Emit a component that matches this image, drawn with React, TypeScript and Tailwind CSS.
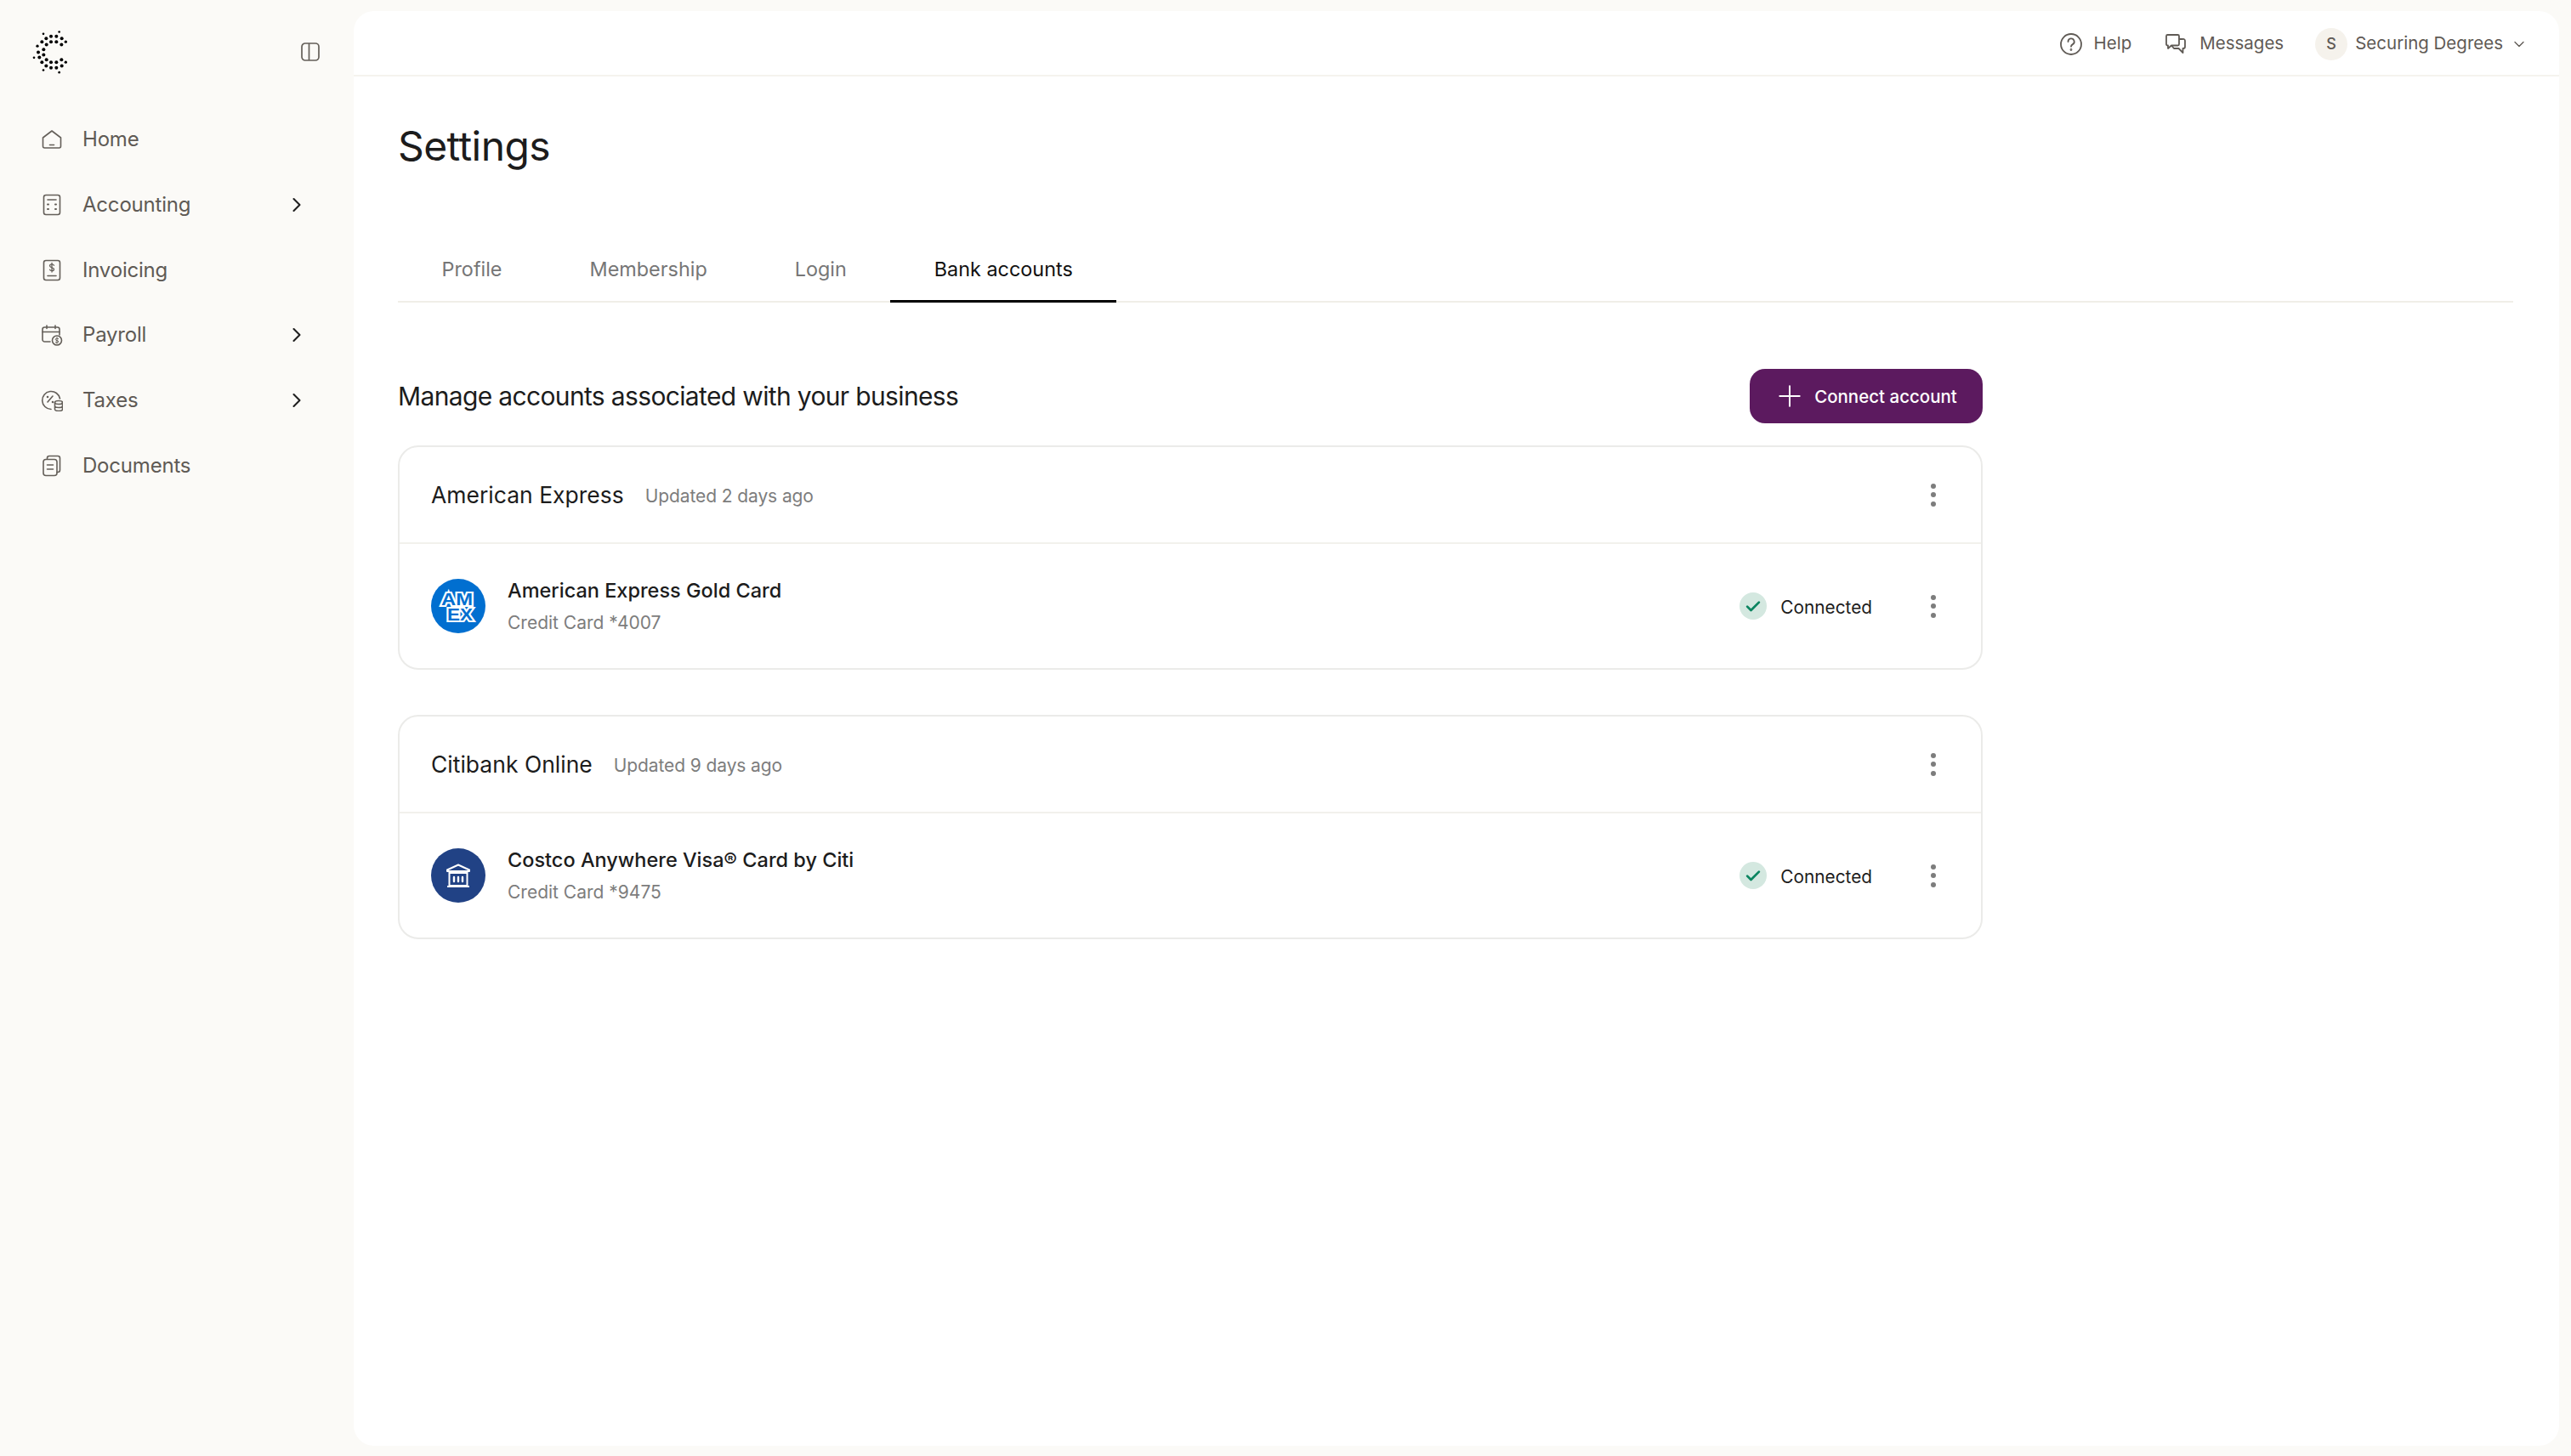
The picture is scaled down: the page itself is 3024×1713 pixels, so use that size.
import type { ReactNode } from "react";
import { ChevronDown, ChevronRight, Plus } from "lucide-react";

const LOGO_DOTS: [number, number, number][] = [
  [154, 118, 4], [210, 111, 4], [164, 134, 6], [181, 127, 6], [200, 127, 6], [219, 134, 6],
  [149, 146, 6], [181, 146, 6], [200, 146, 6], [233, 146, 5], [165, 156, 6], [218, 156, 6],
  [133, 161, 5], [155, 173, 6], [136, 183, 6], [155, 192, 6], [121, 202, 4], [140, 201, 6],
  [165, 209, 6], [218, 209, 6], [149, 218, 6], [181, 218, 6], [200, 218, 6], [233, 218, 5],
  [164, 231, 6], [219, 231, 6], [181, 238, 6], [200, 238, 6], [154, 246, 4], [210, 254, 4],
];

function Logo() {
  return (
    <svg viewBox="100 95 150 170" className="h-[57px] w-[50px]" fill="#000">
      {LOGO_DOTS.map(([cx, cy, r]) => (
        <circle key={`${cx}-${cy}`} cx={cx} cy={cy} r={r} />
      ))}
    </svg>
  );
}

function Stroke({ children, size = 26 }: { children: ReactNode; size?: number }) {
  return (
    <svg
      viewBox="0 0 26 26"
      width={size}
      height={size}
      fill="none"
      stroke="#645f59"
      strokeWidth="1.6"
      strokeLinecap="round"
      strokeLinejoin="round"
    >
      {children}
    </svg>
  );
}

const HomeIcon = () => (
  <Stroke>
    <path d="M2.5 11 13 3l10.500 8v10a2 2 0 0 1-2 2h-17a2 2 0 0 1-2-2z" />
    <path d="M10.500 19.500h5" />
  </Stroke>
);

const CalcIcon = () => (
  <Stroke>
    <rect x="3.500" y="1.500" width="19" height="23" rx="2.500" />
    <path d="M8 7h10" />
    <path d="M8 12.500h1M17 12.500h1M8 18h1M17 18h1" strokeWidth="2" />
  </Stroke>
);

const InvoiceIcon = () => (
  <Stroke>
    <rect x="3.500" y="1.500" width="19" height="23" rx="2.500" />
    <path d="M8 19.500h10" />
    <path d="M15.500 7.200c-.5-.9-1.400-1.300-2.500-1.300-1.400 0-2.500.7-2.500 1.900 0 2.700 5 1.300 5 3.900 0 1.200-1.100 1.900-2.500 1.900-1.100 0-2-.4-2.500-1.300M13 4.500v10.500" strokeWidth="1.300" />
  </Stroke>
);

const PayrollIcon = () => (
  <Stroke>
    <path d="M11 21H4.500a2.500 2.500 0 0 1-2.500-2.500v-12A2.500 2.500 0 0 1 4.500 4h15A2.500 2.500 0 0 1 22 6.500V13" />
    <path d="M2 9.500h20M7 2v3.500M17 2v3.500" />
    <circle cx="19" cy="19.500" r="5.500" />
    <path d="M20.800 17.800c-.4-.5-1-.8-1.800-.8-1 0-1.800.5-1.800 1.300 0 1.800 3.600.9 3.600 2.600 0 .9-.8 1.400-1.800 1.400-.8 0-1.400-.3-1.800-.8M19 16v7" strokeWidth="1" />
  </Stroke>
);

const TaxIcon = () => (
  <Stroke>
    <path d="M12 23.500A10.500 10.500 0 1 1 22.500 11" />
    <path d="M8 15l6-7" />
    <circle cx="8" cy="9" r=".6" strokeWidth="1.400" />
    <circle cx="14" cy="15" r=".6" strokeWidth="1.400" />
    <ellipse cx="21" cy="15.500" rx="4.500" ry="2" />
    <path d="M16.500 15.500v8c0 1.100 2 2 4.500 2s4.500-.9 4.500-2v-8M16.500 19.500c0 1.100 2 2 4.500 2s4.500-.9 4.500-2" />
  </Stroke>
);

const DocsIcon = () => (
  <Stroke>
    <path d="M7.500 5V4a2.500 2.500 0 0 1 2.500-2.500h10A2.500 2.500 0 0 1 22.500 4v14a2.500 2.500 0 0 1-2.500 2.500h-1" />
    <rect x="3" y="5.500" width="16" height="19" rx="3" />
    <path d="M7.500 12h7M7.500 17h7" />
  </Stroke>
);

const NAV = [
  { label: "Home", icon: <HomeIcon /> },
  { label: "Accounting", icon: <CalcIcon />, more: true },
  { label: "Invoicing", icon: <InvoiceIcon /> },
  { label: "Payroll", icon: <PayrollIcon />, more: true },
  { label: "Taxes", icon: <TaxIcon />, more: true },
  { label: "Documents", icon: <DocsIcon /> },
];

function Sidebar() {
  return (
    <aside className="flex w-[416px] shrink-0 flex-col">
      <div className="flex h-[121px] items-center justify-between pl-[33px] pr-[40px]">
        <Logo />
        <svg viewBox="0 0 22 22" className="h-[22px] w-[22px]" fill="none" stroke="#645f59" strokeWidth="1.700">
          <rect x="1" y="1" width="20" height="20" rx="4" />
          <path d="M9.500 1v20" />
        </svg>
      </div>
      <nav className="flex flex-col pl-[48px] pr-[53px] pt-[5px]">
        {NAV.map((item) => (
          <div key={item.label} className="flex h-[76.700px] items-center">
            <span className="flex w-[26px] justify-center">{item.icon}</span>
            <span className="ml-[23px] text-[24px] tracking-[-0.2px] text-[#5f5a55]">{item.label}</span>
            {item.more ? (
              <ChevronRight className="ml-auto h-[28px] w-[28px] text-[#1e1e1e]" strokeWidth={1.800} />
            ) : null}
          </div>
        ))}
      </nav>
    </aside>
  );
}

function TopBar() {
  return (
    <header className="flex h-[77px] items-center justify-end border-b-2 border-[#f5f3ee] pr-[37px] pt-[2px] text-[20.500px] text-[#5f5a55]">
      <svg viewBox="0 0 26 26" width="26" height="26" fill="none" stroke="#5f5a55" strokeWidth="1.800" strokeLinecap="round">
        <circle cx="13" cy="13" r="12" />
        <path d="M9.500 10a3.600 3.600 0 1 1 5.400 3.100c-1.200.7-1.900 1.400-1.900 2.700" />
        <circle cx="13" cy="19.500" r=".5" />
      </svg>
      <span className="ml-[14px]">Help</span>
      <svg className="ml-[39px]" viewBox="0 0 26 26" width="26" height="26" fill="none" stroke="#5f5a55" strokeWidth="1.800" strokeLinejoin="round">
        <path d="M2 3.500A1.500 1.500 0 0 1 3.500 2h12A1.500 1.500 0 0 1 17 3.500V13a1.500 1.500 0 0 1-1.500 1.500H8L4 18v-3.500H3.500A1.500 1.500 0 0 1 2 13z" />
        <path d="M17 7h4.500A2 2 0 0 1 24 9v7a2 2 0 0 1-2 2h-.5v5l-5-5H11l-3-3.500" />
      </svg>
      <span className="ml-[15px]">Messages</span>
      <span className="ml-[37px] flex h-[38px] w-[38px] items-center justify-center rounded-full bg-[#f5f2ec] text-[18px] font-medium">
        S
      </span>
      <span className="ml-[9px]">Securing Degrees</span>
      <ChevronDown className="ml-[9px] h-[20px] w-[20px]" strokeWidth={1.600} />
    </header>
  );
}

const TABS = ["Profile", "Membership", "Login", "Bank accounts"];

function Tabs() {
  return (
    <div className="flex border-b-2 border-[#f0eee8] text-[23.400px]">
      {TABS.map((tab) => {
        const active = tab === "Bank accounts";
        return (
          <div
            key={tab}
            className={
              active
                ? "-mb-[2px] flex h-[74px] items-center border-b-[3px] border-black px-[51.500px] pb-[2px] text-[#111]"
                : "-mb-[2px] flex h-[74px] items-center px-[51.500px] pb-[5px] text-[#767676]"
            }
          >
            {tab}
          </div>
        );
      })}
    </div>
  );
}

function Dots() {
  return (
    <span className="flex w-[8px] flex-col items-center gap-[4.500px]">
      <span className="h-[6px] w-[6px] rounded-full bg-[#7d7d7d]" />
      <span className="h-[6px] w-[6px] rounded-full bg-[#7d7d7d]" />
      <span className="h-[6px] w-[6px] rounded-full bg-[#7d7d7d]" />
    </span>
  );
}

function AmexBadge() {
  return (
    <span className="flex h-[64px] w-[64px] shrink-0 items-center justify-center rounded-full bg-[#016fd0]">
      <svg viewBox="0 0 64 64" className="h-[64px] w-[64px]">
        <g
          fontFamily="Liberation Sans, sans-serif"
          fontWeight="700"
          fontSize="21"
          fill="#016fd0"
          stroke="#fff"
          strokeWidth="4.200"
          strokeLinejoin="miter"
          textAnchor="middle"
          paintOrder="stroke"
        >
          <text x="30.500" y="31" textLength="37" lengthAdjust="spacingAndGlyphs">AM</text>
          <text x="34" y="48.500" textLength="30" lengthAdjust="spacingAndGlyphs">EX</text>
        </g>
      </svg>
    </span>
  );
}

function BankBadge() {
  return (
    <span className="flex h-[64px] w-[64px] shrink-0 items-center justify-center rounded-full bg-[#214285]">
      <svg viewBox="0 0 32 32" className="h-[32px] w-[32px]" fill="none" stroke="#fff" strokeWidth="2">
        <path d="M3 9.500 16 3.500l13 6v1.500H3z" strokeLinejoin="round" />
        <rect x="5.500" y="13" width="21" height="15" />
        <path d="M3 29h26" />
        <path d="M11 18v5M16 18v5M21 18v5" strokeWidth="2.400" strokeLinecap="round" />
      </svg>
    </span>
  );
}

type Account = {
  bank: string;
  updated: string;
  card: string;
  detail: string;
  badge: ReactNode;
};

const ACCOUNTS: Account[] = [
  {
    bank: "American Express",
    updated: "Updated 2 days ago",
    card: "American Express Gold Card",
    detail: "Credit Card *4007",
    badge: <AmexBadge />,
  },
  {
    bank: "Citibank Online",
    updated: "Updated 9 days ago",
    card: "Costco Anywhere Visa® Card by Citi",
    detail: "Credit Card *9475",
    badge: <BankBadge />,
  },
];

function AccountCard({ account }: { account: Account }) {
  return (
    <section className="rounded-[24px] border-2 border-[#ebebe9]">
      <div className="flex h-[114px] items-center border-b-2 border-[#f2f1ec] pl-[37px] pr-[52px]">
        <span className="pt-[2px] text-[26.500px] text-[#1c1c1c]">{account.bank}</span>
        <span className="ml-[25px] pt-[3px] text-[21px] tracking-[-0.1px] text-[#7d7d7d]">{account.updated}</span>
        <span className="ml-auto">
          <Dots />
        </span>
      </div>
      <div className="flex h-[146px] items-center pl-[37px] pr-[52px]">
        {account.badge}
        <div className="ml-[26px] flex flex-col gap-[6px] pt-[2px]">
          <span className="text-[23.500px] font-medium leading-[32px] text-[#1c1c1c]">{account.card}</span>
          <span className="text-[21px] leading-[32px] text-[#7d7d7d]">{account.detail}</span>
        </div>
        <span className="ml-auto flex h-[32px] w-[32px] items-center justify-center rounded-full bg-[#d4e8e0]">
          <svg viewBox="0 0 16 16" className="h-[20px] w-[20px]" fill="none" stroke="#0b8560" strokeWidth="2.200" strokeLinecap="round" strokeLinejoin="round">
            <path d="M2.500 8.500 6 12 13.500 4.500" />
          </svg>
        </span>
        <span className="ml-[16px] pt-[3px] text-[20.800px] text-[#1c1c1c]">Connected</span>
        <span className="ml-[68px]">
          <Dots />
        </span>
      </div>
    </section>
  );
}

export default function App() {
  return (
    <div className="flex h-[1713px] w-[3024px] bg-[#fbfaf7] font-['Inter',sans-serif]">
      <Sidebar />
      <main className="mb-[12px] mr-[14px] mt-[13px] flex-1 rounded-[24px] bg-white">
        <TopBar />
        <div className="px-[52px]">
          <h1 className="pt-[47px] text-[48px] leading-[70px] tracking-[-0.6px] text-[#1c1c1c]">Settings</h1>
          <div className="mt-[75px] w-[2488px]">
            <Tabs />
          </div>
          <div className="w-[1864px]">
            <div className="mt-[78px] flex items-center justify-between">
              <h2 className="text-[30px] tracking-[-0.65px] text-[#1c1c1c]">Manage accounts associated with your business</h2>
              <button className="flex h-[64px] w-[274px] items-center justify-center gap-[9px] rounded-[18px] bg-[#5c1a5f] pr-[3px] pt-[2px] text-[20.500px] font-medium text-white">
                <Plus className="-mt-[2px] h-[40px] w-[40px]" strokeWidth={1.200} />
                Connect account
              </button>
            </div>
            <div className="mt-[26px] flex flex-col gap-[53px]">
              {ACCOUNTS.map((account) => (
                <AccountCard key={account.bank} account={account} />
              ))}
            </div>
          </div>
        </div>
      </main>
    </div>
  );
}
